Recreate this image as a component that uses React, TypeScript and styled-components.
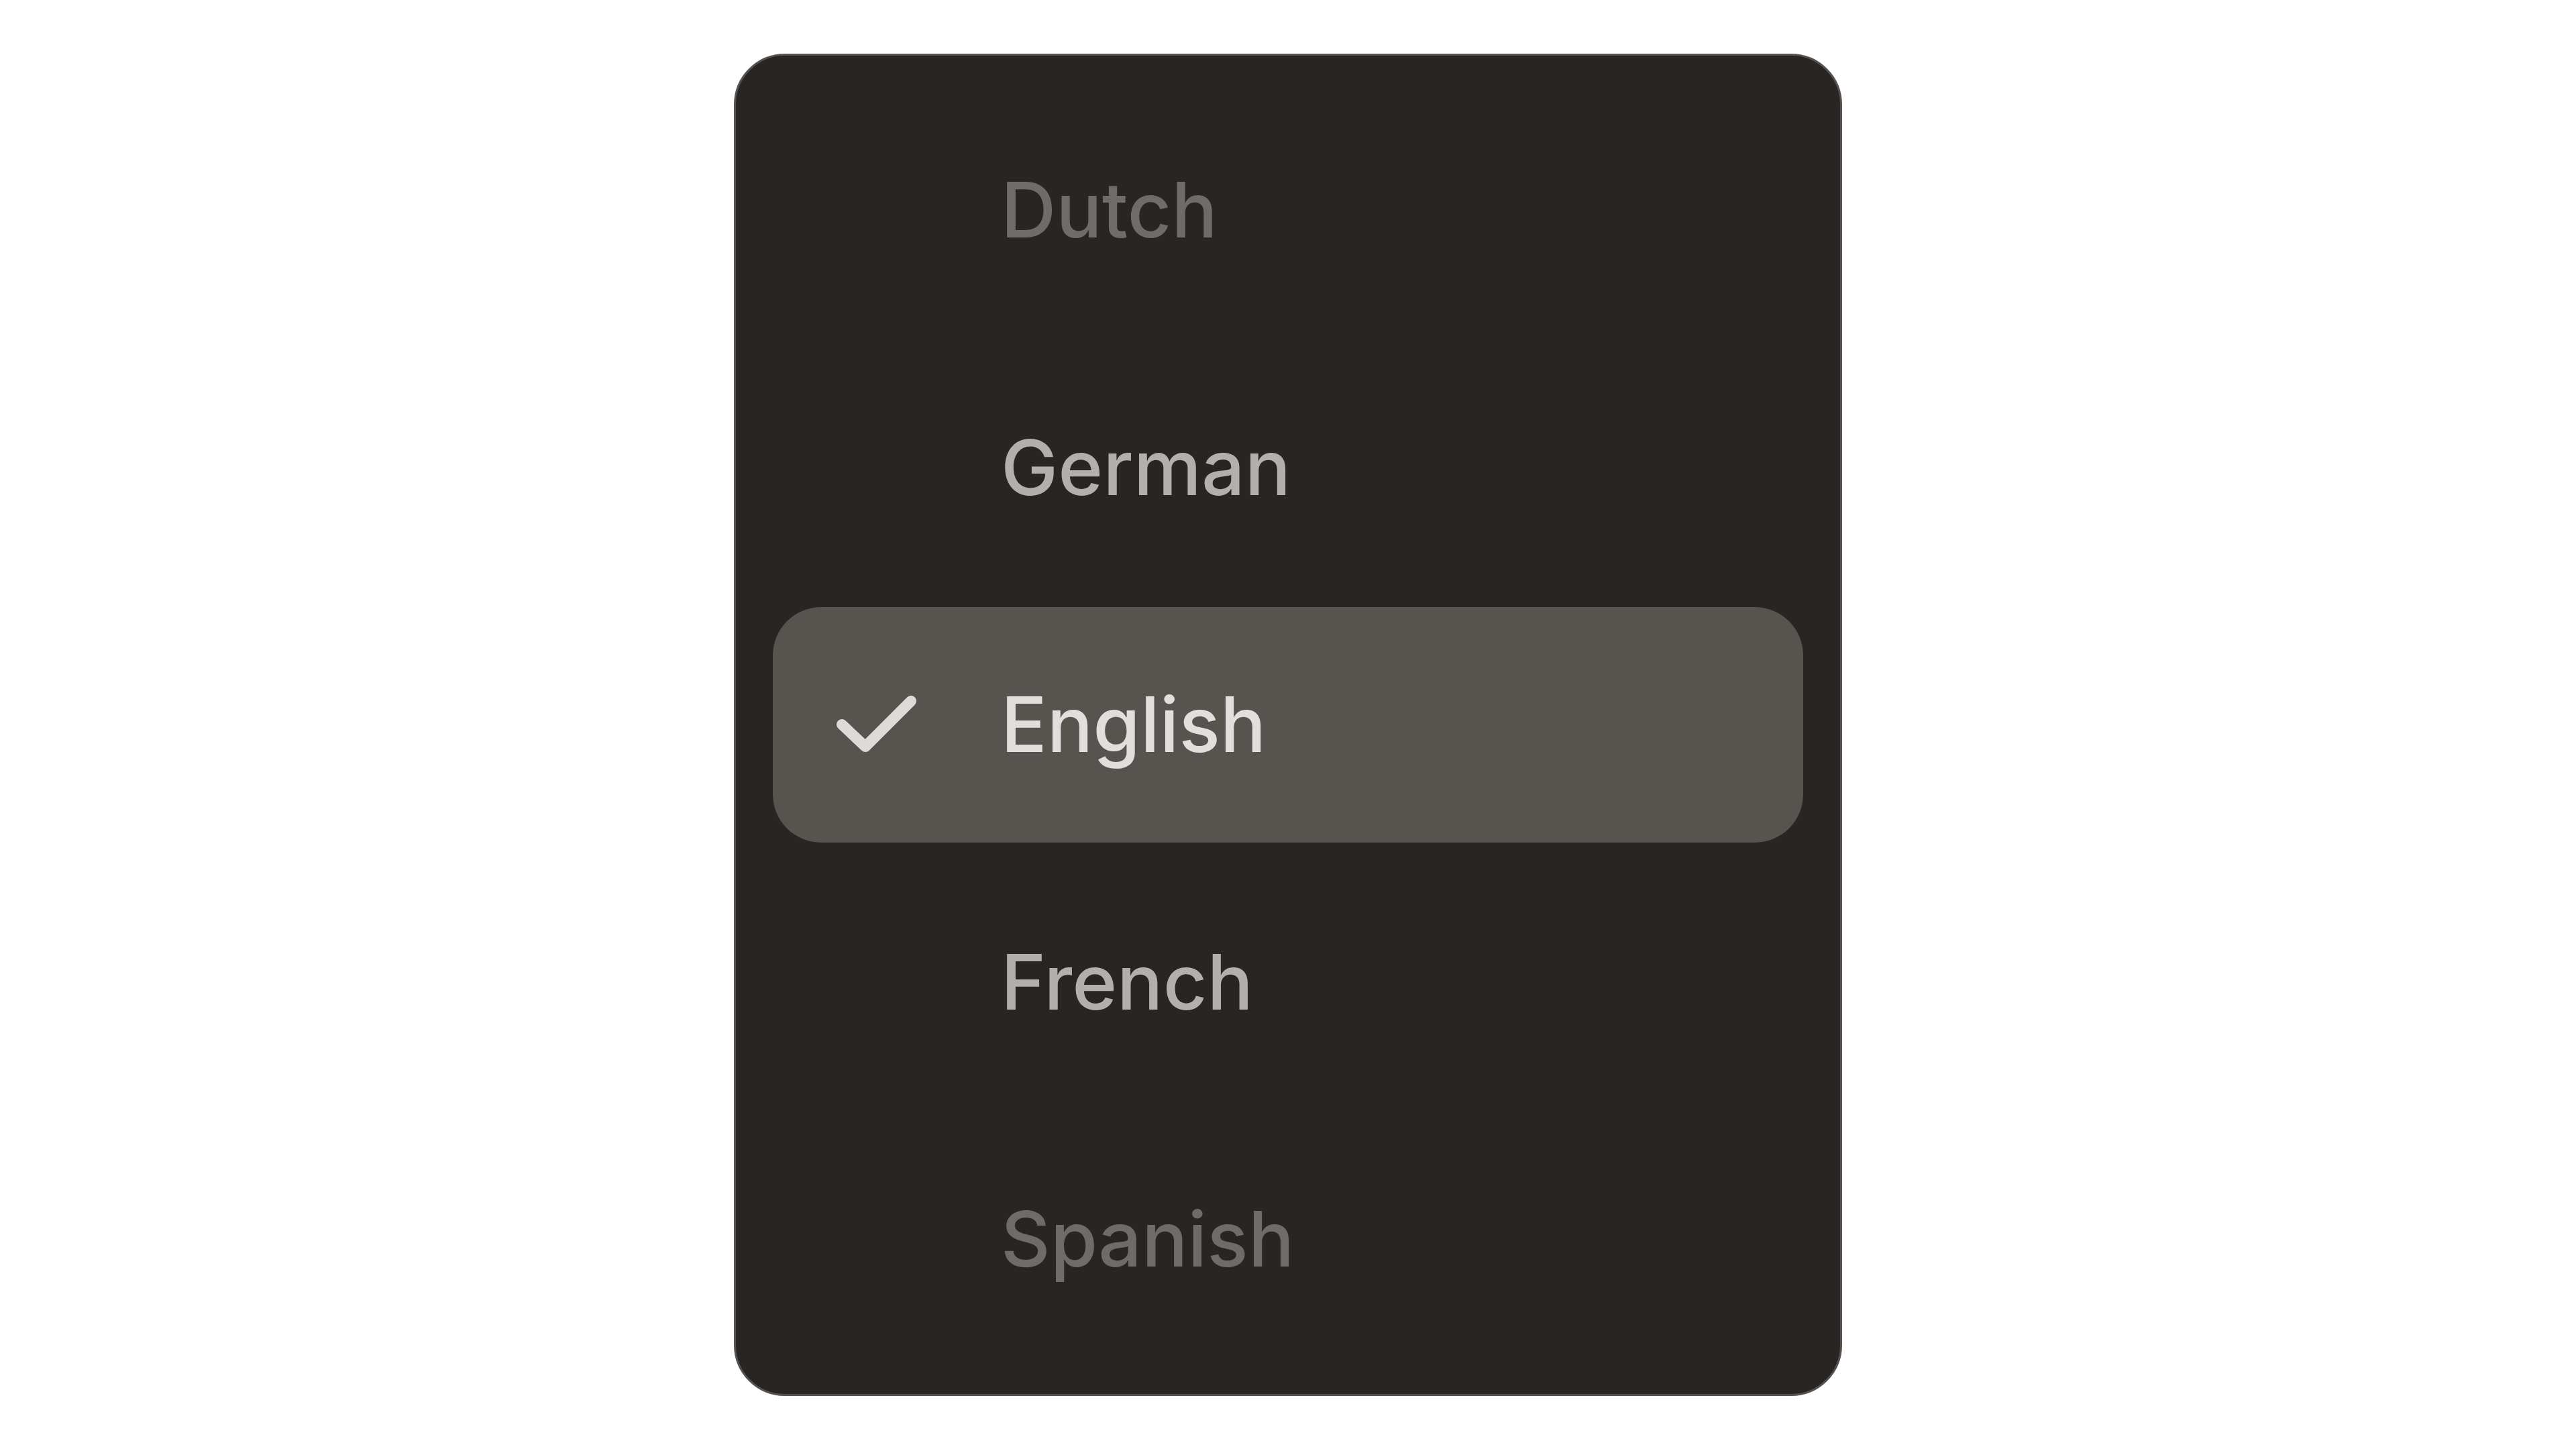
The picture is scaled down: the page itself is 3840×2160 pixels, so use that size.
import { createGlobalStyle, styled } from 'styled-components'

const GlobalStyle = createGlobalStyle`
  html, body {
    margin: 0;
    padding: 0;
    background: #ffffff;
  }
  body {
    font-family: Inter, "Noto Sans", sans-serif;
  }
`

type Tone = 'faded' | 'muted' | 'active'

const languages: { name: string; tone: Tone }[] = [
  { name: 'Dutch', tone: 'faded' },
  { name: 'German', tone: 'muted' },
  { name: 'English', tone: 'active' },
  { name: 'French', tone: 'muted' },
  { name: 'Spanish', tone: 'faded' },
]

const toneColor: Record<Tone, string> = {
  faded: '#6f6b68',
  muted: '#b3afac',
  active: '#e0dfdd',
}

const CheckMark = () => (
  <svg width="135" height="100" viewBox="0 0 135 100" fill="none">
    <path
      d="M15 50 L50 83 L118 15"
      stroke="#dcdbd9"
      strokeWidth="16"
      strokeLinecap="round"
      strokeLinejoin="round"
    />
  </svg>
)

const App = () => {
  return (
    <Page>
      <GlobalStyle />
      <Panel>
        {languages.map(({ name, tone }) => (
          <Row key={name} $selected={tone === 'active'}>
            <IconSlot>{tone === 'active' && <CheckMark />}</IconSlot>
            <Label $tone={tone}>{name}</Label>
          </Row>
        ))}
      </Panel>
    </Page>
  )
}

export default App

const Page = styled.div`
  width: 100%;
  min-height: 100vh;
  display: flex;
  align-items: center;
  justify-content: center;
`

const Panel = styled.div`
  width: 1652px;
  box-sizing: border-box;
  background: #292524;
  border: 3px solid #55514d;
  border-radius: 76px;
  padding: 55px;
  display: flex;
  flex-direction: column;
  gap: 32.5px;
`

const Row = styled.div<{ $selected: boolean }>`
  height: 351px;
  border-radius: 72px;
  background: ${p => (p.$selected ? '#57534e' : 'transparent')};
  display: flex;
  align-items: center;
  padding-left: 88px;
`

const IconSlot = styled.div`
  width: 252px;
  height: 100px;
  display: flex;
  align-items: center;
`

const Label = styled.div<{ $tone: Tone }>`
  font-family: Inter, "Noto Sans", sans-serif;
  font-size: 114px;
  line-height: 1;
  font-weight: 500;
  color: ${p => toneColor[p.$tone]};
`
